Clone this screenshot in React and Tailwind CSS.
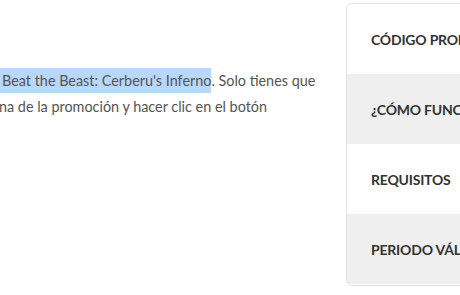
export default function App() {
  const items = ["CÓDIGO PROMOCIONAL", "¿CÓMO FUNCIONA?", "REQUISITOS", "PERIODO VÁLIDO"];
  return (
    <div className="w-[460px] h-[295px] overflow-hidden bg-white relative flex" style={{ fontFamily: 'Lato, sans-serif' }}>
      <div className="w-[346px] shrink-0 pt-[68px] text-[14.4px] leading-[26px] text-[#555]">
        <div className="whitespace-nowrap">
          <span className="bg-[#b9d6fb] pl-[2px] py-[4px]">Beat the Beast: Cerberu's Inferno</span>. Solo tienes que
        </div>
        <div className="whitespace-nowrap -ml-[1px]">na de la promoción y hacer clic en el botón</div>
      </div>
      <div className="mt-[3px] w-[200px] h-[283px] shrink-0 border border-[#e3e3e3] rounded-[6px] overflow-hidden flex flex-col">
        {items.map((t, i) => (
          <div key={t} className={`h-[70px] shrink-0 flex items-center pl-[24px] whitespace-nowrap text-[14px] tracking-[-0.2px] font-bold text-[#333] ${i % 2 ? "bg-[#efefef]" : "bg-white"}`}>
            {t}
          </div>
        ))}
      </div>
    </div>
  );
}
